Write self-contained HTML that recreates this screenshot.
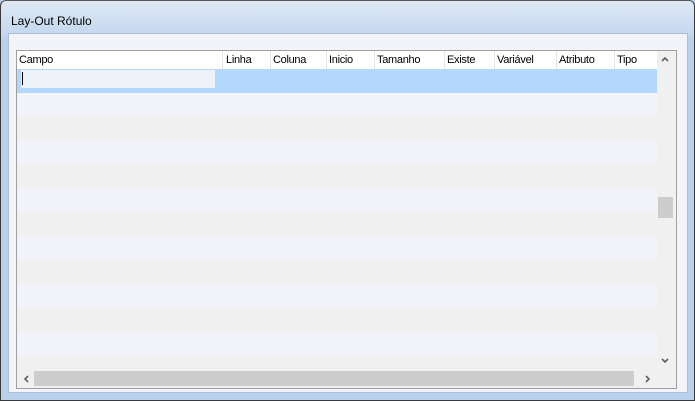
<!DOCTYPE html><html><head><style>
*{margin:0;padding:0;box-sizing:border-box}
body{width:695px;height:401px;overflow:hidden;background:#b9d1ea;font-family:"Liberation Sans",sans-serif;position:relative}
.frame{position:absolute;left:0;top:0;width:695px;height:401px;border:1px solid #3a3a3a;border-top-color:#555;border-radius:6px 6px 0 0;background:linear-gradient(#dfe9f5,#c4d8ee 33px,#b9d1ea 40px)}
.title{position:absolute;left:11px;top:14px;font-size:12px;color:#000}
.client{position:absolute;left:8px;top:33px;width:680px;height:360px;background:#f3f4f9;border:1px solid #aac0d8}
.grid{position:absolute;left:16px;top:50px;width:661px;height:339px;border:1px solid #a0a0a0;background:#f0f0f0;overflow:hidden}
.hdr{position:absolute;left:0;top:0;width:640px;height:18px;background:#fff;font-size:11px;letter-spacing:-0.3px}
.hdr span{position:absolute;top:3px}
.sep{position:absolute;top:0;width:1px;height:18px;background:#e5e5e5}
.row{position:absolute;left:0;width:640px;height:24px}
.vs{position:absolute;left:640px;top:0;width:17px;height:319px;background:#f0f0f0}
.hs{position:absolute;left:0;top:319px;width:657px;height:18px;background:#f0f0f0}
svg{position:absolute}
</style></head><body>
<div class="frame"></div>
<div class="title">Lay-Out Rótulo</div>
<div class="client"></div>
<div class="grid">
<div class="hdr">
<span style="left:2px">Campo</span>
<div class="sep" style="left:205px"></div><span style="left:209px">Linha</span>
<div class="sep" style="left:253px"></div><span style="left:256px">Coluna</span>
<div class="sep" style="left:309px"></div><span style="left:312px">Inicio</span>
<div class="sep" style="left:357px"></div><span style="left:360px">Tamanho</span>
<div class="sep" style="left:427px"></div><span style="left:430px">Existe</span>
<div class="sep" style="left:477px"></div><span style="left:480px">Variável</span>
<div class="sep" style="left:539px"></div><span style="left:542px">Atributo</span>
<div class="sep" style="left:597px"></div><span style="left:600px">Tipo</span>
</div>
<div class="row" style="top:18px;background:#b3d7fd"><div style="position:absolute;left:4px;top:1px;width:194px;height:18px;background:#eef1f7"></div><div style="position:absolute;left:5px;top:3px;width:1px;height:13px;background:#000"></div></div>
<div class="row" style="top:42px;background:#f3f4f9"></div>
<div class="row" style="top:66px;background:#f0f0f0"></div>
<div class="row" style="top:90px;background:#f3f4f9"></div>
<div class="row" style="top:114px;background:#f0f0f0"></div>
<div class="row" style="top:138px;background:#f3f4f9"></div>
<div class="row" style="top:162px;background:#f0f0f0"></div>
<div class="row" style="top:186px;background:#f3f4f9"></div>
<div class="row" style="top:210px;background:#f0f0f0"></div>
<div class="row" style="top:234px;background:#f3f4f9"></div>
<div class="row" style="top:258px;background:#f0f0f0"></div>
<div class="row" style="top:282px;background:#f3f4f9"></div>
<div class="row" style="top:306px;background:#f0f0f0"></div>
<div class="vs">
<svg style="left:4px;top:5px" width="8" height="6"><path d="M1 5L4 2L7 5" stroke="#606060" stroke-width="1.6" fill="none"/></svg>
<div style="position:absolute;left:1px;top:146px;width:15px;height:21px;background:#cdcdcd"></div>
<svg style="left:4px;top:307px" width="8" height="6"><path d="M1 1L4 4L7 1" stroke="#606060" stroke-width="1.6" fill="none"/></svg>
</div>
<div class="hs">
<svg style="left:6px;top:5px" width="6" height="8"><path d="M5 1L2 4L5 7" stroke="#606060" stroke-width="1.6" fill="none"/></svg>
<div style="position:absolute;left:17px;top:1px;width:600px;height:15px;background:#cdcdcd"></div>
<svg style="left:628px;top:5px" width="6" height="8"><path d="M1 1L4 4L1 7" stroke="#606060" stroke-width="1.6" fill="none"/></svg>
</div>
</div>
</body></html>
